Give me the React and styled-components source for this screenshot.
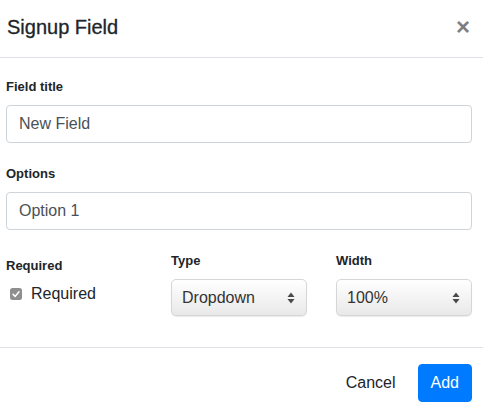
import React from 'react';
import styled, { createGlobalStyle } from 'styled-components';

const GlobalStyle = createGlobalStyle`
  html, body {
    margin: 0;
    padding: 0;
    background: #fff;
  }
  body {
    font-family: "Liberation Sans", Arial, sans-serif;
    color: #212529;
  }
`;

const Modal = styled.div`
  width: 483px;
  height: 413px;
  display: flex;
  flex-direction: column;
  background: #fff;
`;

const Header = styled.div`
  height: 58px;
  display: flex;
  align-items: center;
  justify-content: space-between;
  padding: 0 13px 4px 7px;
  box-sizing: border-box;
  border-bottom: 1px solid #dee2e6;
  flex-shrink: 0;
`;

const Title = styled.h5`
  margin: 0;
  font-size: 20px;
  font-weight: 500;
  line-height: 30px;
  color: #212529;
  -webkit-text-stroke: 0.3px #212529;
`;

const Close = styled.button`
  border: 0;
  background: transparent;
  padding: 0;
  font-family: "Liberation Sans", Arial, sans-serif;
  font-size: 24px;
  font-weight: 700;
  line-height: 1;
  color: #000;
  opacity: 0.5;
  cursor: pointer;
`;

const Body = styled.div`
  flex: 1;
  display: flex;
  flex-direction: column;
  gap: 21px;
  padding: 19px 11px 0 6px;
`;

const Group = styled.div`
  display: flex;
  flex-direction: column;
`;

const Label = styled.label`
  display: block;
  font-size: 13px;
  font-weight: 700;
  line-height: 20px;
  margin-bottom: ${(p) => (p.$tight ? '6px' : '8px')};
  padding-top: ${(p) => (p.$offset ? '5px' : '0')};
  color: #212529;
`;

const Input = styled.input`
  height: 38px;
  box-sizing: border-box;
  width: 100%;
  padding: 6px 12px;
  font-family: "Liberation Sans", Arial, sans-serif;
  font-size: 16px;
  color: #495057;
  border: 1px solid #ced4da;
  border-radius: 4px;
  background: #fff;
  outline: none;
`;

const Row = styled.div`
  display: grid;
  grid-template-columns: repeat(3, 1fr);
  column-gap: 29px;
`;

const CheckRow = styled.label`
  display: flex;
  align-items: center;
  gap: 9px;
  padding-left: 4px;
  font-size: 16px;
  line-height: 24px;
  color: #212529;
`;

const SelectBox = styled.div`
  height: 37px;
  box-sizing: border-box;
  display: flex;
  align-items: center;
  justify-content: space-between;
  padding: 0 11px 0 10px;
  border: 1px solid #d6d6d6;
  border-radius: 5px;
  background: linear-gradient(#ffffff 0%, #f6f6f6 40%, #e9e9e9 100%);
  box-shadow: 0 1px 1px rgba(0, 0, 0, 0.08);
  font-size: 16px;
  color: #333;
`;

const Footer = styled.div`
  display: flex;
  justify-content: flex-end;
  align-items: center;
  gap: 9px;
  padding: 16px 11px 11px 0;
  border-top: 1px solid #dee2e6;
`;

const Button = styled.button`
  height: 38px;
  box-sizing: border-box;
  padding: 6px 12px;
  font-family: "Liberation Sans", Arial, sans-serif;
  font-size: 16px;
  line-height: 24px;
  border-radius: 4px;
  border: 1px solid ${(p) => (p.$primary ? '#007bff' : 'transparent')};
  background: ${(p) => (p.$primary ? '#007bff' : 'transparent')};
  color: ${(p) => (p.$primary ? '#fff' : '#212529')};
  cursor: pointer;
`;

const Checkbox = () => (
  <svg width="12" height="12" viewBox="0 0 12 12">
    <rect x="0" y="0" width="12" height="12" rx="2.5" fill="#8f8f8f" />
    <path d="M3 6.3 L5.1 8.4 L9 3.8" fill="none" stroke="#fff" strokeWidth="1.5" strokeLinecap="round" strokeLinejoin="round" />
  </svg>
);

const Arrows = () => (
  <svg width="8" height="12" viewBox="0 0 8 12">
    <path d="M4 0.5 L7.5 5 L0.5 5 Z" fill="#4a4a4a" />
    <path d="M4 11.5 L7.5 7 L0.5 7 Z" fill="#4a4a4a" />
  </svg>
);

const Select = ({ value }) => (
  <SelectBox>
    <span>{value}</span>
    <Arrows />
  </SelectBox>
);

export default function App() {
  return (
    <>
      <GlobalStyle />
      <Modal>
        <Header>
          <Title>Signup Field</Title>
          <Close aria-label="Close">×</Close>
        </Header>
        <Body>
          <Group>
            <Label>Field title</Label>
            <Input defaultValue="New Field" />
          </Group>
          <Group>
            <Label>Options</Label>
            <Input defaultValue="Option 1" />
          </Group>
          <Row>
            <Group>
              <Label $offset $tight>Required</Label>
              <CheckRow>
                <Checkbox />
                Required
              </CheckRow>
            </Group>
            <Group>
              <Label>Type</Label>
              <Select value="Dropdown" />
            </Group>
            <Group>
              <Label>Width</Label>
              <Select value="100%" />
            </Group>
          </Row>
        </Body>
        <Footer>
          <Button>Cancel</Button>
          <Button $primary>Add</Button>
        </Footer>
      </Modal>
    </>
  );
}
